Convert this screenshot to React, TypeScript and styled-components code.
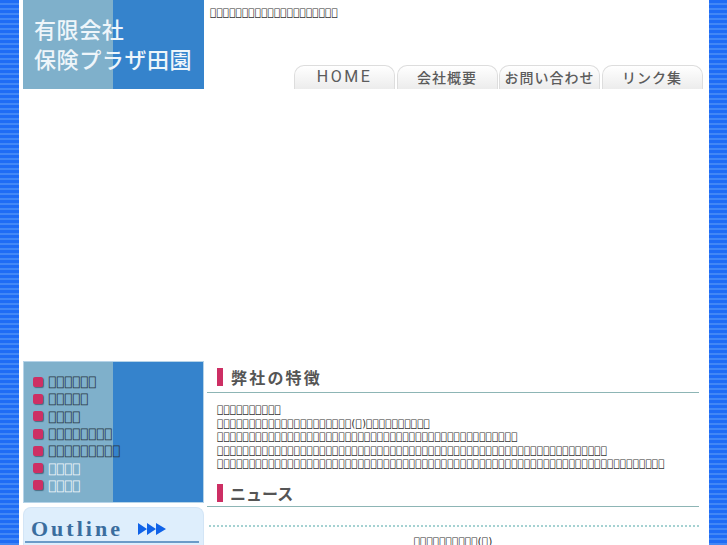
import React from 'react';
import styled, { createGlobalStyle } from 'styled-components';

const GlobalStyle = createGlobalStyle`
  html, body {
    margin: 0;
    padding: 0;
    height: 100%;
    overflow: hidden;
    background: repeating-linear-gradient(180deg, #1f6cf5 0, #1f6cf5 3px, #4287f6 3px, #4287f6 5px);
    font-family: "DejaVu Sans", sans-serif;
  }
`;

const Page = styled.div`
  width: 690px;
  height: 545px;
  margin-left: 19px;
  background: #fff;
  overflow: hidden;
  padding: 0 4px;
  box-sizing: border-box;
`;

const Top = styled.header`
  display: flex;
  height: 89px;
`;

const Logo = styled.div`
  width: 181px;
  height: 89px;
  box-sizing: border-box;
  padding-top: 13px;
  padding-left: 11px;
  background: linear-gradient(90deg, #7fb0cb 0, #7fb0cb 90px, #3583cc 90px);
  color: #eef5fa;
  font-family: "Noto Sans CJK JP", sans-serif;
  font-size: 22px;
  font-weight: 500;
  letter-spacing: 0.6px;
  line-height: 30px;
  white-space: nowrap;
`;

const TopRight = styled.div`
  flex: 1;
  display: flex;
  flex-direction: column;
  justify-content: space-between;
  padding-left: 6px;
`;

const Tagline = styled.div`
  font-size: 8pt;
  line-height: 14px;
  margin-top: 6px;
  color: #333;
`;

const Tabs = styled.nav`
  display: flex;
  gap: 1.5px;
  padding-left: 84px;
`;

const Tab = styled.div`
  width: 101px;
  height: 24px;
  box-sizing: border-box;
  border: 1px solid #ddd;
  border-bottom: none;
  border-radius: 10px 10px 0 0;
  background: linear-gradient(180deg, #fff, #ececec);
  color: #5c5c5c;
  font-family: "Noto Sans CJK JP", sans-serif;
  font-size: 14px;
  font-weight: 500;
  line-height: 22px;
  text-align: center;
  letter-spacing: 1px;
`;

const HomeTab = styled(Tab)`
  font-family: Roboto, sans-serif;
  font-size: 16px;
  font-weight: 400;
  letter-spacing: 2.5px;
`;

const Hero = styled.div`
  height: 272px;
`;

const Columns = styled.div`
  display: flex;
`;

const Side = styled.aside`
  width: 181px;
  flex: none;
`;

const Menu = styled.ul`
  list-style: none;
  margin: 0;
  padding: 11px 0 0 9px;
  height: 142px;
  box-sizing: border-box;
  border: 1px solid #b5d3e8;
  background: linear-gradient(90deg, #7fb0cb 0, #7fb0cb 89px, #3583cc 89px);
`;

const MenuItem = styled.li<{ $light?: boolean }>`
  display: flex;
  align-items: center;
  gap: 5px;
  height: 17.3px;
  font-size: 10pt;
  white-space: nowrap;
  color: ${p => (p.$light ? '#eef5fa' : '#2b3a46')};
`;

const Bullet = styled.span`
  width: 10px;
  height: 10px;
  flex: none;
  border-radius: 2px;
  background: #cd2f64;
  box-shadow: 1px 1px 1px rgba(40, 60, 80, 0.6);
`;

const OutlineBox = styled.div`
  margin-top: 4px;
  height: 60px;
  box-sizing: border-box;
  padding: 9px 4px 0 1px;
  border: 1px solid #d3e5f6;
  border-bottom: none;
  border-radius: 8px 8px 0 0;
  background: #deeefc;
`;

const OutlineTitle = styled.div`
  display: flex;
  align-items: center;
  gap: 15px;
  height: 24px;
  padding-left: 6px;
  border-bottom: 2px solid #6b9bc8;
  color: #3a6d9e;
  font-family: "Liberation Serif", serif;
  font-weight: bold;
  font-size: 22px;
  letter-spacing: 3px;
`;

const Main = styled.main`
  flex: 1;
  padding-left: 3px;
  padding-right: 6px;
`;

const Heading = styled.h2`
  display: flex;
  align-items: center;
  gap: 8px;
  margin: 0;
  height: 31px;
  padding-left: 10px;
  border-bottom: 1px solid #8db5b5;
  color: #555;
  font-family: "Noto Sans CJK JP", sans-serif;
  font-size: 16px;
  font-weight: 700;
  letter-spacing: 2.2px;
`;

const NewsHeading = styled(Heading)`
  gap: 7px;
  height: 26px;
  padding-top: 4px;
  letter-spacing: 0;
`;

const HeadingMark = styled.span`
  width: 6px;
  height: 18px;
  background: #cd2f64;
`;

const Body = styled.div`
  padding: 10px 0 5.5px 10px;
  font-size: 8pt;
  line-height: 13.5px;
  color: #333;
  white-space: nowrap;
`;

const Dotted = styled.div`
  margin: 18px 0 0 2px;
  border-top: 2px dotted #a5d2d2;
`;

const Centered = styled.div`
  margin-top: 8px;
  font-size: 8pt;
  line-height: 14px;
  text-align: center;
  color: #333;
`;

const tofu = (n: number) => '\uE000'.repeat(n);

const menuItems = [
  { n: 6 },
  { n: 5 },
  { n: 4 },
  { n: 8 },
  { n: 9 },
  { n: 4, light: true },
  { n: 4, light: true },
];

export default function App() {
  return (
    <>
      <GlobalStyle />
      <Page>
        <Top>
          <Logo>有限会社<br />保険プラザ田園</Logo>
          <TopRight>
            <Tagline>{tofu(20)}</Tagline>
            <Tabs>
              <HomeTab>HOME</HomeTab>
              <Tab>会社概要</Tab>
              <Tab>お問い合わせ</Tab>
              <Tab>リンク集</Tab>
            </Tabs>
          </TopRight>
        </Top>
        <Hero />
        <Columns>
          <Side>
            <Menu>
              {menuItems.map((m, i) => (
                <MenuItem key={i} $light={m.light}>
                  <Bullet />
                  {tofu(m.n)}
                </MenuItem>
              ))}
            </Menu>
            <OutlineBox>
              <OutlineTitle>
                Outline
                <svg width="28" height="12" viewBox="0 0 28 12">
                  <path d="M0 0l9 6-9 6zM9 0l9 6-9 6zM18 0l10 6-10 6z" fill="#0f62e8" />
                </svg>
              </OutlineTitle>
            </OutlineBox>
          </Side>
          <Main>
            <Heading><HeadingMark />弊社の特徴</Heading>
            <Body>
              {tofu(10)}<br />
              {tofu(21)}({tofu(1)}){tofu(10)}<br />
              {tofu(47)}<br />
              {tofu(61)}<br />
              {tofu(70)}
            </Body>
            <NewsHeading><HeadingMark />ニュース</NewsHeading>
            <Dotted />
            <Centered>{tofu(10)}({tofu(1)})</Centered>
          </Main>
        </Columns>
      </Page>
    </>
  );
}
